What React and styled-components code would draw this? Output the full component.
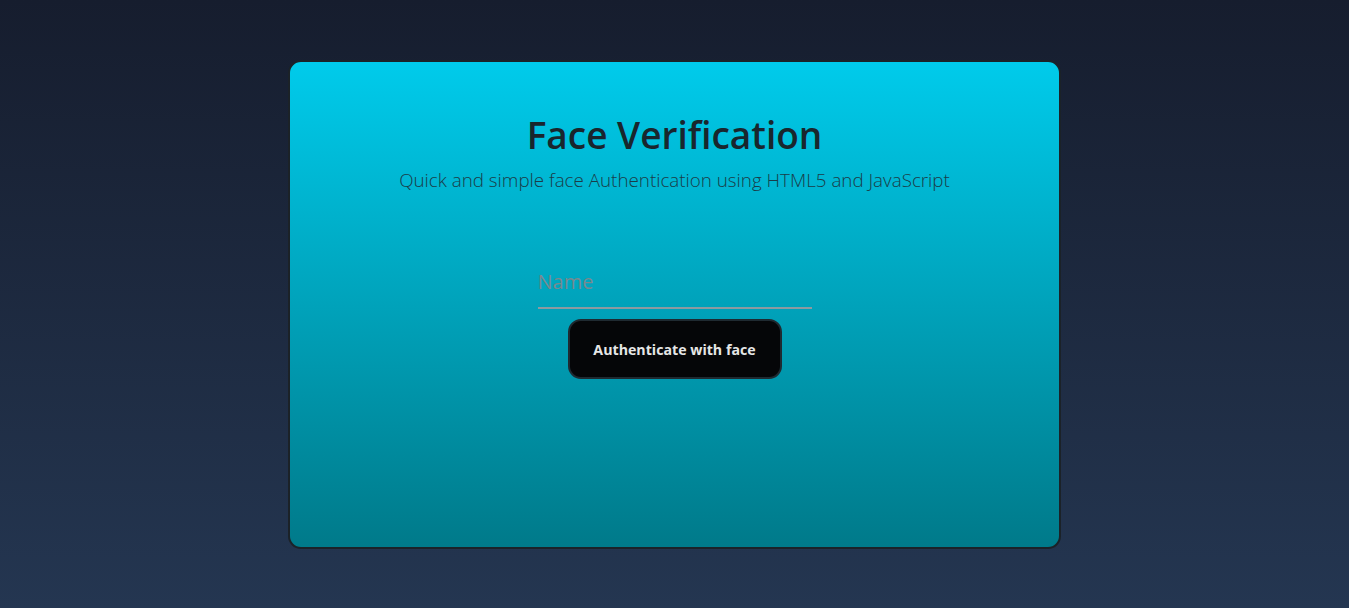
import React from "react";
import styled, { createGlobalStyle } from "styled-components";

const Global = createGlobalStyle`
  html, body { margin: 0; padding: 0; }
  body {
    min-height: 100vh;
    background: linear-gradient(180deg, #161d2e 0%, #243651 100%);
    font-family: "Open Sans", "Noto Sans", sans-serif;
  }
  #root { min-height: 100vh; }
`;

const Page = styled.main`
  min-height: 100vh;
  display: flex;
  justify-content: center;
  align-items: flex-start;
  padding-top: 60px;
  box-sizing: border-box;
`;

const Card = styled.section`
  width: 773px;
  height: 489px;
  box-sizing: border-box;
  border: 2px solid #1b2228;
  border-radius: 13px;
  background: linear-gradient(180deg, #00cbeb 0%, #007a8a 100%);
  display: flex;
  flex-direction: column;
  align-items: center;
  padding-top: 48px;
`;

const Title = styled.h1`
  margin: 0;
  font-size: 37px;
  font-weight: 600;
  line-height: 50px;
  color: #19262d;
`;

const Subtitle = styled.p`
  margin: 7px 0 0;
  font-size: 18.8px;
  font-weight: 300;
  line-height: 26px;
  color: #1b3c48;
`;

const Form = styled.form`
  margin-top: 71px;
  display: flex;
  flex-direction: column;
  align-items: center;
  gap: 10px;
`;

const NameInput = styled.input`
  width: 274px;
  box-sizing: border-box;
  border: none;
  border-bottom: 2px solid #8d9aa0;
  background: transparent;
  padding: 5px 0 12px;
  font-family: inherit;
  font-size: 20px;
  line-height: 26px;
  color: #1b2a30;
  outline: none;
  &::placeholder { color: #78898f; }
`;

const Button = styled.button`
  width: 214px;
  height: 60px;
  box-sizing: border-box;
  border: 2px solid #1f2a31;
  border-radius: 13px;
  background: #050608;
  color: #e6e6e6;
  font-family: inherit;
  font-size: 14.2px;
  font-weight: 700;
  cursor: pointer;
`;

export default function App() {
  return (
    <>
      <Global />
      <Page>
        <Card>
          <Title>Face Verification</Title>
          <Subtitle>Quick and simple face Authentication using HTML5 and JavaScript</Subtitle>
          <Form onSubmit={(e) => e.preventDefault()}>
            <NameInput type="text" placeholder="Name" />
            <Button type="submit">Authenticate with face</Button>
          </Form>
        </Card>
      </Page>
    </>
  );
}
